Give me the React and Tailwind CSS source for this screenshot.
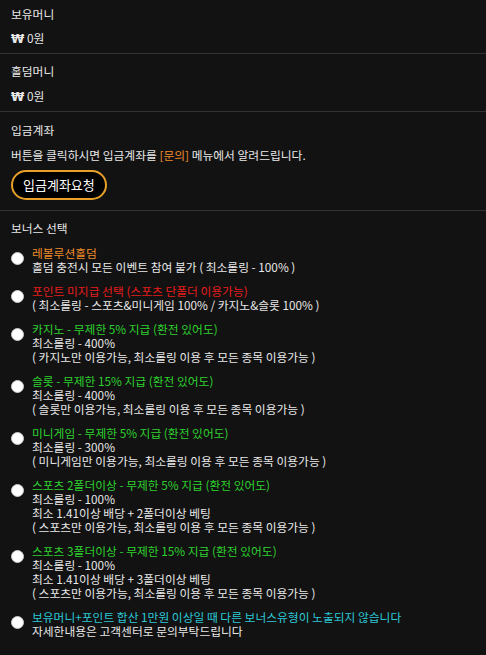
import React from 'react';

const bonuses = [
  {
    title: '레볼루션홀덤',
    color: 'text-[#f08c2a]',
    lines: ['홀덤 충전시 모든 이벤트 참여 불가 ( 최소롤링 - 100% )'],
  },
  {
    title: '포인트 미지급 선택 (스포츠 단폴더 이용가능)',
    color: 'text-[#e81c1c]',
    lines: ['( 최소롤링 - 스포츠&미니게임 100% / 카지노&슬롯 100% )'],
  },
  {
    title: '카지노 - 무제한 5% 지급 (환전 있어도)',
    color: 'text-[#2ed12e]',
    lines: ['최소롤링 - 400%', '( 카지노만 이용가능, 최소롤링 이용 후 모든 종목 이용가능 )'],
  },
  {
    title: '슬롯 - 무제한 15% 지급 (환전 있어도)',
    color: 'text-[#2ed12e]',
    lines: ['최소롤링 - 400%', '( 슬롯만 이용가능, 최소롤링 이용 후 모든 종목 이용가능 )'],
  },
  {
    title: '미니게임 - 무제한 5% 지급 (환전 있어도)',
    color: 'text-[#2ed12e]',
    lines: ['최소롤링 - 300%', '( 미니게임만 이용가능, 최소롤링 이용 후 모든 종목 이용가능 )'],
  },
  {
    title: '스포츠 2폴더이상 - 무제한 5% 지급 (환전 있어도)',
    color: 'text-[#2ed12e]',
    lines: ['최소롤링 - 100%', '최소 1.41이상 배당 + 2폴더이상 베팅', '( 스포츠만 이용가능, 최소롤링 이용 후 모든 종목 이용가능 )'],
  },
  {
    title: '스포츠 3폴더이상 - 무제한 15% 지급 (환전 있어도)',
    color: 'text-[#2ed12e]',
    lines: ['최소롤링 - 100%', '최소 1.41이상 배당 + 3폴더이상 베팅', '( 스포츠만 이용가능, 최소롤링 이용 후 모든 종목 이용가능 )'],
  },
  {
    title: '보유머니+포인트 합산 1만원 이상일 때 다른 보너스유형이 노출되지 않습니다',
    color: 'text-[#2cc9d6]',
    lines: ['자세한내용은 고객센터로 문의부탁드립니다'],
  },
];

const Won = () => (
  <span className="font-bold text-[12px]" style={{ fontFamily: '"DejaVu Sans", sans-serif' }}>₩</span>
);

const App = () => {
  return (
    <div className="w-[486px] h-[655px] bg-[#121212] text-[#e8e8e8] text-[11.75px] leading-[14px] overflow-hidden" style={{ fontFamily: '"Noto Sans CJK KR", "Noto Sans", sans-serif' }}>
      {/* 보유머니 */}
      <div className="h-[54px] px-[11px] pt-[5px] border-b border-[#333]">
        <p className="leading-[18px]">보유머니</p>
        <p className="leading-[18px] mt-[6px]"><Won /> 0원</p>
      </div>
      {/* 홀덤머니 */}
      <div className="h-[58px] px-[11px] pt-[8px] border-b border-[#333]">
        <p className="leading-[18px]">홀덤머니</p>
        <p className="leading-[18px] mt-[7px]"><Won /> 0원</p>
      </div>
      {/* 입금계좌 */}
      <div className="h-[99px] px-[11px] pt-[9px] border-b border-[#333]">
        <p className="leading-[18px]">입금계좌</p>
        <p className="leading-[18px] mt-[7px]">
          버튼을 클릭하시면 입금계좌를 <span className="text-[#f08c2a]">[문의]</span> 메뉴에서 알려드립니다.
        </p>
        <button className="mt-[6px] h-[30px] px-[10px] rounded-full border-2 border-[#e8a028] bg-black text-white text-[13px] leading-[18px]">
          입금계좌요청
        </button>
      </div>
      {/* 보너스 선택 */}
      <div className="px-[11px] pt-[8px]">
        <p className="leading-[18px]">보너스 선택</p>
        <div className="flex flex-col gap-[10px] mt-[9px]">
          {bonuses.map((b, i) => (
            <div key={i} className="flex flex-row items-start">
              <span className="mt-[6px] w-[13px] h-[13px] rounded-full bg-white border border-[#ccc] shrink-0" />
              <div className="ml-[8px] flex flex-col">
                <p className={b.color}>{b.title}</p>
                {b.lines.map((l, j) => (
                  <p key={j}>{l}</p>
                ))}
              </div>
            </div>
          ))}
        </div>
      </div>
    </div>
  );
};

export default App;
